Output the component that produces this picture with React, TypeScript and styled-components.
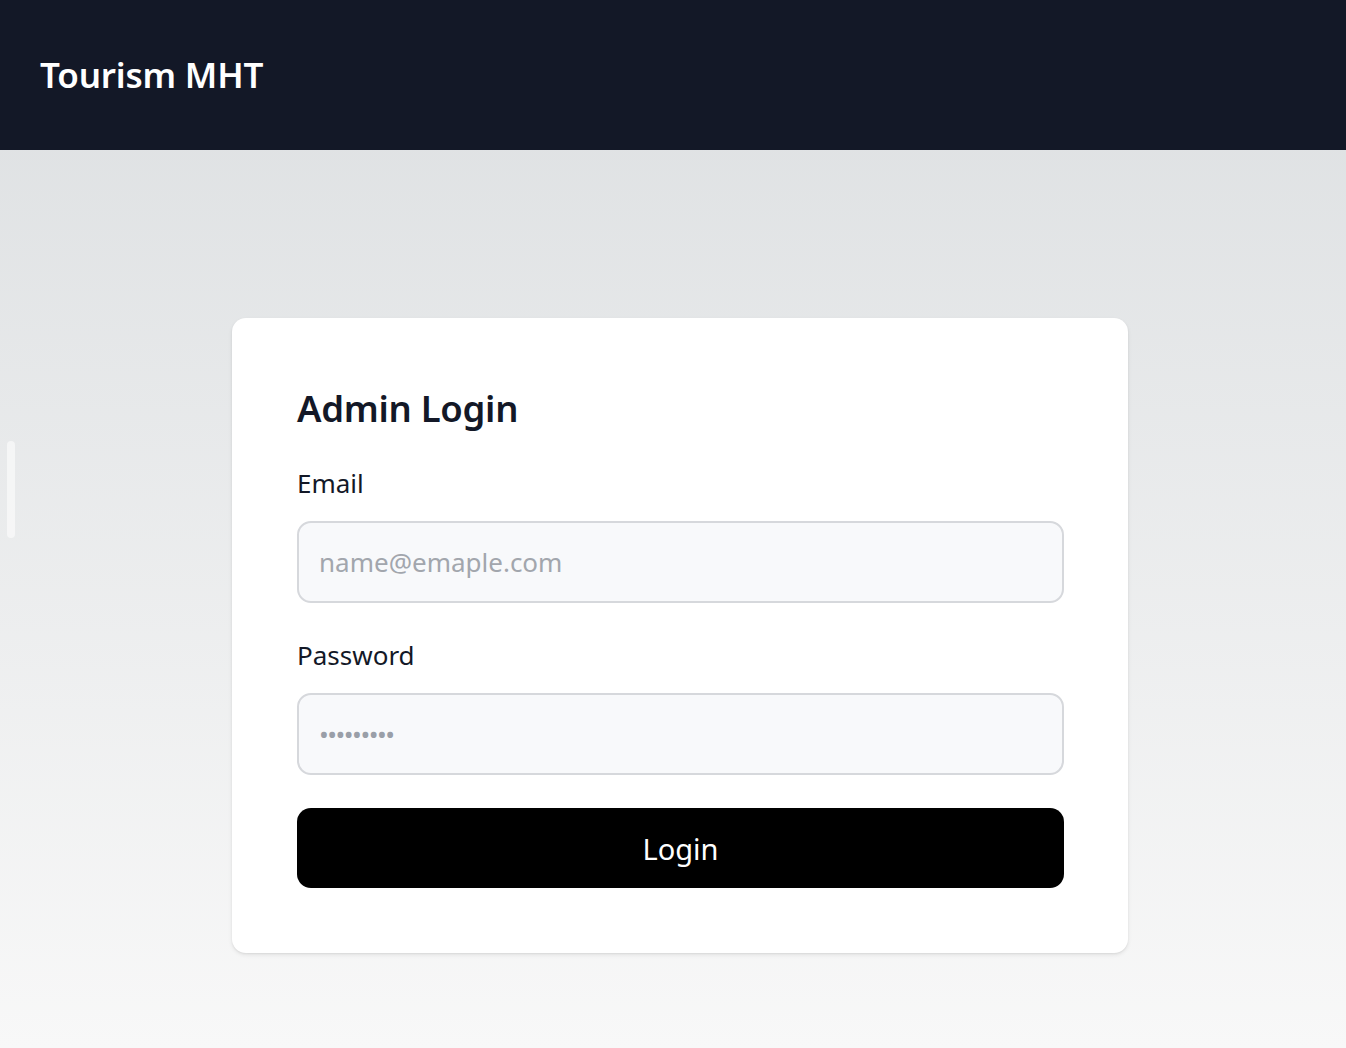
import React from "react";
import styled, { createGlobalStyle } from "styled-components";

const Global = createGlobalStyle`
  html, body { margin: 0; padding: 0; }
  body { font-family: "Noto Sans", "Open Sans", sans-serif; }
  * { box-sizing: border-box; }
`;

const Page = styled.div`
  min-height: 1048px;
  display: flex;
  flex-direction: column;
  background: linear-gradient(180deg, #dcdfe1 0%, #f8f8f8 100%);
  position: relative;
`;

const NavBar = styled.header`
  height: 150px;
  background: #131827;
  display: flex;
  align-items: center;
  padding-left: 40px;
  flex-shrink: 0;
`;

const Brand = styled.div`
  color: #ffffff;
  font-size: 35px;
  font-weight: 600;
  letter-spacing: -0.2px;
  margin-top: -2px;
`;

const Main = styled.main`
  flex: 1;
  display: flex;
  justify-content: center;
  align-items: flex-start;
  padding: 168px 0 0 14px;
`;

const Card = styled.form`
  width: 896px;
  background: #ffffff;
  border-radius: 14px;
  box-shadow: 0 2px 4px rgba(0, 0, 0, 0.08), 0 1px 2px rgba(0, 0, 0, 0.06);
  padding: 64px 64px 65px 65px;
  display: flex;
  flex-direction: column;
`;

const Heading = styled.h1`
  margin: 0 0 31px;
  font-size: 36.5px;
  font-weight: 600;
  color: #131827;
  line-height: 52px;
  letter-spacing: -0.3px;
`;

const Label = styled.label`
  display: block;
  font-size: 26px;
  color: #131827;
  line-height: 36px;
  margin-bottom: 20px;
`;

const Input = styled.input`
  width: 100%;
  height: 82px;
  border: 2px solid #d6d8dc;
  border-radius: 14px;
  background: #f8f9fb;
  padding: 0 20px;
  font-family: inherit;
  font-size: 26px;
  color: #131827;
  outline: none;
  margin-bottom: 34px;
  &::placeholder {
    color: #a2a6ad;
  }
`;

const PasswordInput = styled(Input)`
  &::placeholder {
    letter-spacing: -1.5px;
    color: #9a9fa8;
  }
`;

const Button = styled.button`
  width: 100%;
  height: 80px;
  border: none;
  border-radius: 14px;
  background: #000000;
  color: #ffffff;
  font-family: inherit;
  font-size: 29px;
  font-weight: 400;
  cursor: pointer;
  margin-top: -1px;
`;

const ScrollHint = styled.div`
  position: absolute;
  left: 7px;
  top: 441px;
  width: 8px;
  height: 97px;
  border-radius: 4px;
  background: rgba(255, 255, 255, 0.55);
`;

export default function App() {
  return (
    <>
      <Global />
      <Page>
        <NavBar>
          <Brand>Tourism MHT</Brand>
        </NavBar>
        <Main>
          <Card onSubmit={(e) => e.preventDefault()}>
            <Heading>Admin Login</Heading>
            <Label htmlFor="email">Email</Label>
            <Input id="email" type="email" placeholder="name@emaple.com" />
            <Label htmlFor="password">Password</Label>
            <PasswordInput id="password" type="password" placeholder="•••••••••" />
            <Button type="submit">Login</Button>
          </Card>
        </Main>
        <ScrollHint />
      </Page>
    </>
  );
}
